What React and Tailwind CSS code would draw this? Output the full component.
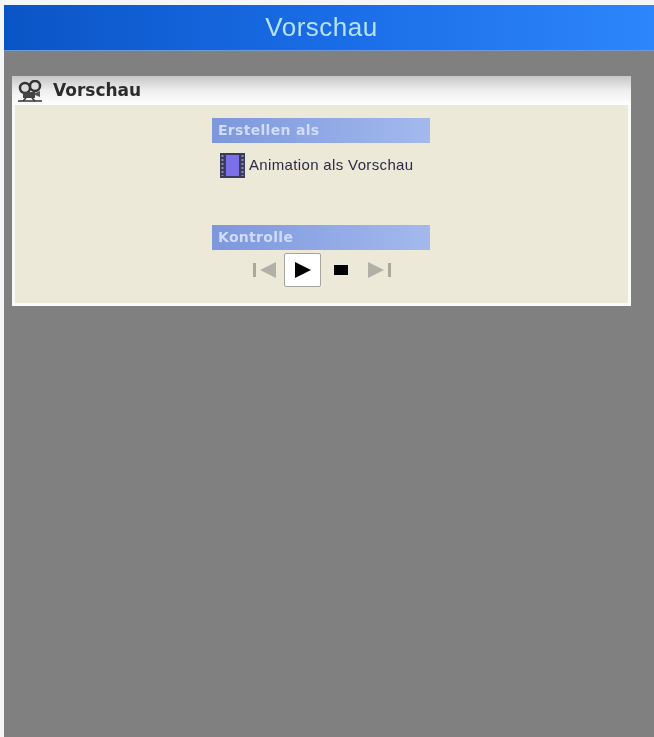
const font = { sans: 'font-["Liberation_Sans",sans-serif]', deja: 'font-["DejaVu_Sans",sans-serif]' };

function SectionBar({ label }) {
  return (
    <div className="w-[218px] h-[25px] pl-[6px] flex items-center bg-gradient-to-r from-[#7d97dc] to-[#a3b9ee]">
      <span className={`${font.deja} text-[14px] tracking-[0.3px] font-bold text-[#cfdcfa]`}>{label}</span>
    </div>
  );
}

function CameraIcon() {
  return (
    <svg width="26" height="22" viewBox="0 0 26 22">
      <circle cx="8" cy="8" r="5" fill="#ddd" stroke="#333" strokeWidth="2.5" />
      <circle cx="18" cy="6" r="5" fill="#ddd" stroke="#333" strokeWidth="2.5" />
      <path d="M6 12h12v6H6z" fill="#444" />
      <path d="M18 13l5-2v6l-5-2z" fill="#555" />
      <path d="M9 18l-3 3M15 18l3 3" stroke="#333" strokeWidth="1.5" />
      <path d="M1 21h24" stroke="#333" strokeWidth="1.5" />
    </svg>
  );
}

function FilmIcon() {
  return (
    <svg width="25" height="25" viewBox="0 0 25 25">
      <rect width="25" height="25" fill="#3a3a5c" />
      <rect x="6" y="2" width="13" height="21" fill="#7a70ea" />
      <path d="M2.5 2v21M22.5 2v21" stroke="#8d8da3" strokeWidth="2" strokeDasharray="2 2" />
    </svg>
  );
}

function SkipIcon({ flip }) {
  return (
    <svg width="23" height="16" viewBox="0 0 23 16" className={flip ? '-scale-x-100' : ''}>
      <path d="M0 1h3v14H0z" fill="#a9a9a0" />
      <path d="M23 0v16L7 8z" fill="#b0b0a6" />
    </svg>
  );
}

export default function App() {
  return (
    <div className="w-[654px] h-[737px] pl-[4px] pt-[5px] bg-[#f4f6f8] flex flex-col overflow-hidden blur-[0.5px]">
      <header className="h-[46px] shrink-0 flex items-center justify-center bg-gradient-to-r from-[#0a55c6] via-[#1a6ce6] to-[#2d86fb] border-b border-[#6d9ad8]">
        <span className={`${font.sans} text-[26px] tracking-[0.5px] text-[#b5e2fd] ml-[-15px]`}>Vorschau</span>
      </header>

      <main className="flex-1 bg-[#808080] pt-[25px] pl-[8px] pr-[23px]">
        <section className="border-[3px] border-t-0 border-[#fafaf6] bg-[#ece9d8] h-[230px]">
          <div className="h-[29px] -mx-[3px] pl-[5px] flex items-center gap-[10px] bg-gradient-to-b from-[#c6c6c6] via-[#eeeeee] to-[#ffffff]">
            <CameraIcon />
            <span className={`${font.deja} text-[17px] font-bold text-[#2c2c2c]`}>Vorschau</span>
          </div>

          <div className="flex flex-col pl-[197px] pt-[13px]">
            <SectionBar label="Erstellen als" />
            <div className="flex items-center gap-[4px] mt-[10px] pl-[8px]">
              <FilmIcon />
              <span className={`${font.sans} text-[15px] tracking-[0.35px] text-[#2b2b45]`}>Animation als Vorschau</span>
            </div>
            <div className="mt-[47px]">
              <SectionBar label="Kontrolle" />
            </div>
            <div className="flex items-center mt-[3px] pl-[41px]">
              <SkipIcon />
              <button className="ml-[8px] w-[37px] h-[34px] flex items-center justify-center bg-white border border-[#a5a5a0] rounded-[2px]">
                <svg width="16" height="16" viewBox="0 0 16 16">
                  <path d="M0 0l16 8-16 8z" fill="#000" />
                </svg>
              </button>
              <div className="ml-[13px] w-[14px] h-[10px] bg-black" />
              <div className="ml-[20px]">
                <SkipIcon flip />
              </div>
            </div>
          </div>
        </section>
      </main>
    </div>
  );
}
